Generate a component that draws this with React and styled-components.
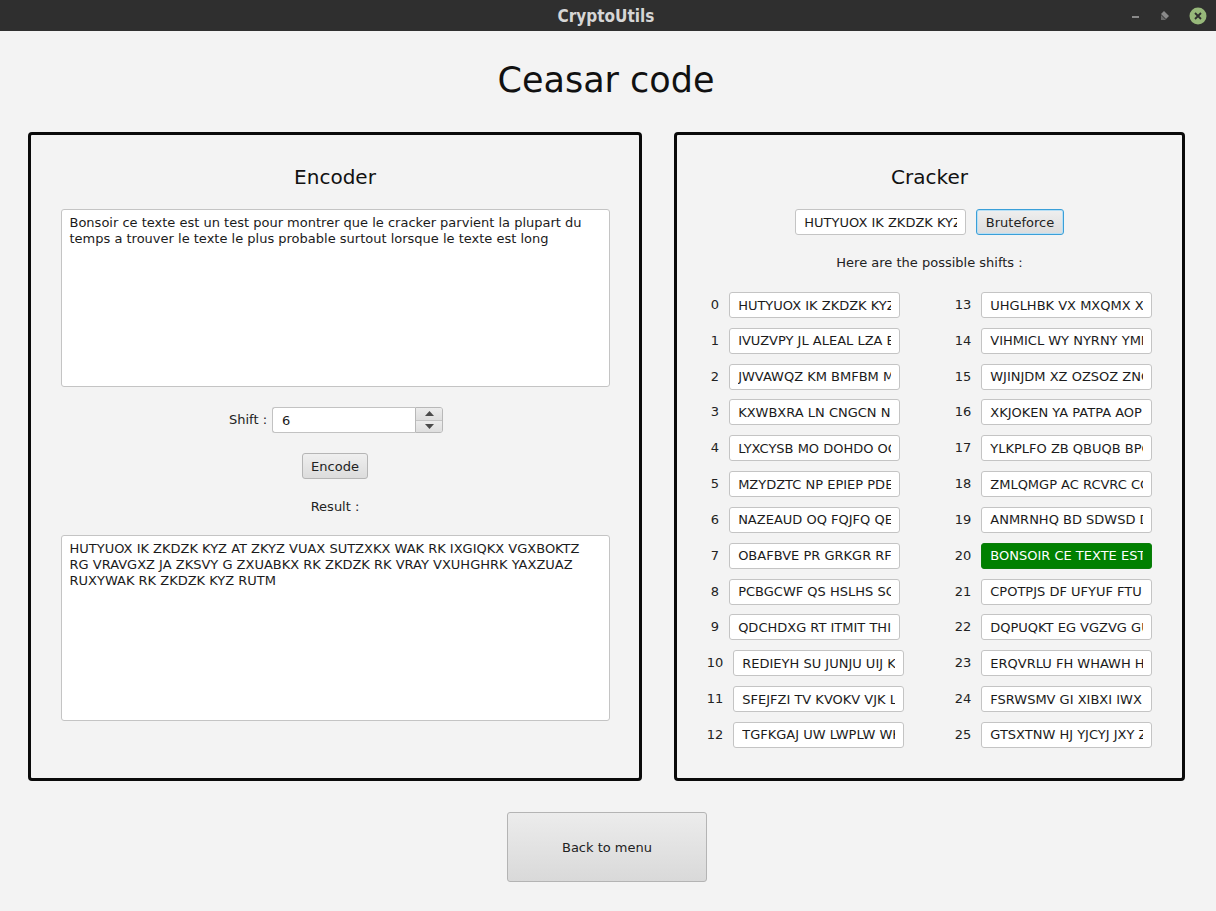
import React from 'react';
import styled, { createGlobalStyle } from 'styled-components';

const PLAIN =
  'Bonsoir ce texte est un test pour montrer que le cracker parvient la plupart du temps a trouver le texte le plus probable surtout lorsque le texte est long';

// decalage de cesar, en majuscules
const shift = (text, n) =>
  text
    .toUpperCase()
    .split('')
    .map(ch => {
      const c = ch.charCodeAt(0);
      if (c < 65 || c > 90) return ch;
      return String.fromCharCode(((c - 65 + n) % 26) + 65);
    })
    .join('');

const CIPHER = shift(PLAIN, 6);

const GlobalStyle = createGlobalStyle`
  html, body {
    margin: 0;
    padding: 0;
    background: #f3f3f3;
  }
  body {
    font-family: "DejaVu Sans", "Liberation Sans", sans-serif;
    font-size: 13px;
    color: #222;
  }
  * {
    box-sizing: border-box;
  }
`;

const App = () => {
  const shifts = Array.from({ length: 26 }, (_, i) => i);

  return (
    <Window>
      <GlobalStyle />
      <TitleBar>
        <span />
        <WindowTitle>CryptoUtils</WindowTitle>
        <Controls>
          <svg width="10" height="10" viewBox="0 0 10 10">
            <rect x="1" y="5" width="7" height="2" fill="#8a8a8a" />
          </svg>
          <svg width="10" height="10" viewBox="0 0 10 10">
            <path d="M1 3 L4 0 L9 5 L6 8 Z" fill="#8a8a8a" />
            <path d="M1 4 L1 9 L6 9 Z" fill="#6a6a6a" />
          </svg>
          <svg width="18" height="18" viewBox="0 0 18 18">
            <circle cx="9" cy="9" r="8.5" fill="#97b87a" />
            <path d="M6 6 L12 12 M12 6 L6 12" stroke="#2f2f2f" strokeWidth="1.8" />
          </svg>
        </Controls>
      </TitleBar>

      <Content>
        <Heading>Ceasar code</Heading>

        <Panels>
          <Panel $width={614}>
            <PanelTitle>Encoder</PanelTitle>
            <TextArea
              $height={178}
              readOnly
              value={
                'Bonsoir ce texte est un test pour montrer que le cracker parvient la plupart du\ntemps a trouver le texte le plus probable surtout lorsque le texte est long'
              }
            />

            <ShiftRow>
              <Label>Shift :</Label>
              <Spinner>
                <SpinnerInput readOnly value="6" />
                <SpinnerButtons>
                  <SpinnerArrow>
                    <svg width="9" height="5" viewBox="0 0 9 5">
                      <path d="M0 5 L4.5 0 L9 5 Z" fill="#4a4a4a" />
                    </svg>
                  </SpinnerArrow>
                  <SpinnerArrow>
                    <svg width="9" height="5" viewBox="0 0 9 5">
                      <path d="M0 0 L4.5 5 L9 0 Z" fill="#4a4a4a" />
                    </svg>
                  </SpinnerArrow>
                </SpinnerButtons>
              </Spinner>
            </ShiftRow>

            <Button>Encode</Button>
            <ResultLabel>Result :</ResultLabel>
            <TextArea
              $height={186}
              $gap={20}
              readOnly
              value={
                'HUTYUOX IK ZKDZK KYZ AT ZKYZ VUAX SUTZXKX WAK RK IXGIQKX VGXBOKTZ\nRG VRAVGXZ JA ZKSVY G ZXUABKX RK ZKDZK RK VRAY VXUHGHRK YAXZUAZ\nRUXYWAK RK ZKDZK KYZ RUTM'
              }
            />
          </Panel>

          <Panel $width={511}>
            <PanelTitle>Cracker</PanelTitle>
            <InputRow>
              <Field readOnly value={CIPHER} />
              <Button $focused>Bruteforce</Button>
            </InputRow>
            <HintLabel>Here are the possible shifts :</HintLabel>

            <ShiftGrid>
              {shifts.map(n => (
                <ShiftItem key={n}>
                  <Label>{n}</Label>
                  <Field $found={n === 20} readOnly value={shift(CIPHER, n)} />
                </ShiftItem>
              ))}
            </ShiftGrid>
          </Panel>
        </Panels>

        <BackButton>Back to menu</BackButton>
      </Content>
    </Window>
  );
};

export default App;

const Window = styled.div`
  width: 1216px;
  height: 911px;
  background: #f3f3f3;
  display: flex;
  flex-direction: column;
  overflow: hidden;
`;

const TitleBar = styled.div`
  height: 31px;
  flex-shrink: 0;
  background: #2f2f2f;
  display: grid;
  grid-template-columns: 1fr auto 1fr;
  align-items: center;
`;

const WindowTitle = styled.div`
  font-family: "DejaVu Sans Condensed", "DejaVu Sans", sans-serif;
  font-stretch: condensed;
  font-weight: bold;
  font-size: 17px;
  color: #d6d6d6;
  margin-right: 4px;
`;

const Controls = styled.div`
  display: flex;
  justify-content: flex-end;
  align-items: center;
  gap: 19px;
  padding-right: 9px;
`;

const Content = styled.div`
  display: flex;
  flex-direction: column;
  padding-right: 2px;
`;

const Heading = styled.h1`
  margin: 28px 0 31px;
  padding-right: 2px;
  text-align: center;
  font-size: 35px;
  line-height: 42px;
  font-weight: normal;
  color: #111;
`;

const Panels = styled.div`
  display: flex;
  gap: 32px;
  padding-left: 28px;
`;

const Panel = styled.div`
  width: ${p => p.$width}px;
  height: 649px;
  border: 3px solid #0a0a0a;
  border-radius: 4px;
  display: flex;
  flex-direction: column;
  align-items: center;
  padding-top: 30px;
`;

const PanelTitle = styled.div`
  font-size: 20px;
  line-height: 24px;
  color: #111;
  margin-bottom: 20px;
`;

const TextArea = styled.textarea`
  display: block;
  width: 549px;
  height: ${p => p.$height}px;
  margin: ${p => p.$gap || 0}px 0 0;
  padding: 5px 8px;
  border: 1px solid #c4c4c4;
  border-radius: 3px;
  background: #fff;
  font-family: "DejaVu Sans", sans-serif;
  font-size: 13px;
  line-height: 16px;
  color: #1b1b1b;
  resize: none;
  overflow: hidden;
  outline: none;
`;

const ShiftRow = styled.div`
  display: flex;
  align-items: center;
  gap: 5px;
  margin-top: 20px;
  padding-left: 2px;
`;

const Label = styled.span`
  font-size: 13px;
  line-height: 16px;
  color: #222;
`;

const Spinner = styled.div`
  display: flex;
  width: 171px;
  height: 26px;
`;

const SpinnerInput = styled.input`
  width: 143px;
  height: 26px;
  padding: 0 9px;
  border: 1px solid #c2c2c2;
  border-right: none;
  border-radius: 3px 0 0 3px;
  background: #fff;
  font-family: "DejaVu Sans", sans-serif;
  font-size: 13px;
  color: #1b1b1b;
  outline: none;
`;

const SpinnerButtons = styled.div`
  width: 28px;
  display: flex;
  flex-direction: column;
  border: 1px solid #b8b8b8;
  border-radius: 0 3px 3px 0;
  overflow: hidden;
`;

const SpinnerArrow = styled.div`
  flex: 1;
  display: flex;
  align-items: center;
  justify-content: center;
  background: linear-gradient(#ececec, #dedede);

  & + & {
    border-top: 1px solid #c4c4c4;
  }
`;

const Button = styled.button`
  height: 26px;
  margin-top: ${p => (p.$focused ? 0 : 20)}px;
  padding: 0 8.5px;
  border: 1px solid ${p => (p.$focused ? '#3a9fd8' : '#b5b5b5')};
  box-shadow: ${p => (p.$focused ? 'inset 0 0 0 1px #b7dff5' : 'none')};
  border-radius: 3px;
  background: linear-gradient(#efefef, #dcdcdc);
  font-family: "DejaVu Sans", sans-serif;
  font-size: 13px;
  color: #222;
`;

const ResultLabel = styled(Label)`
  margin-top: 20px;
`;

const InputRow = styled.div`
  display: flex;
  align-items: center;
  gap: 10px;
`;

const Field = styled.input`
  width: 171px;
  height: 26px;
  padding: 0 8px;
  border: 1px solid ${p => (p.$found ? '#0b7d0b' : '#c4c4c4')};
  border-radius: 3px;
  background: ${p => (p.$found ? '#008000' : '#fff')};
  font-family: "DejaVu Sans", sans-serif;
  font-size: 13px;
  color: ${p => (p.$found ? '#fff' : '#1b1b1b')};
  outline: none;
`;

const HintLabel = styled(Label)`
  margin-top: 20px;
`;

const ShiftGrid = styled.div`
  display: grid;
  grid-template-columns: repeat(2, 248px);
  grid-template-rows: repeat(13, 26px);
  grid-auto-flow: column;
  row-gap: 9.83px;
  justify-content: center;
  margin-top: 21px;
`;

const ShiftItem = styled.div`
  display: flex;
  align-items: center;
  justify-content: center;
  gap: 10px;
`;

const BackButton = styled.button`
  align-self: center;
  width: 200px;
  height: 70px;
  margin-top: 31px;
  border: 1px solid #b4b4b4;
  border-radius: 3px;
  background: linear-gradient(#ececec, #d9d9d9);
  font-family: "DejaVu Sans", sans-serif;
  font-size: 13px;
  color: #222;
`;
